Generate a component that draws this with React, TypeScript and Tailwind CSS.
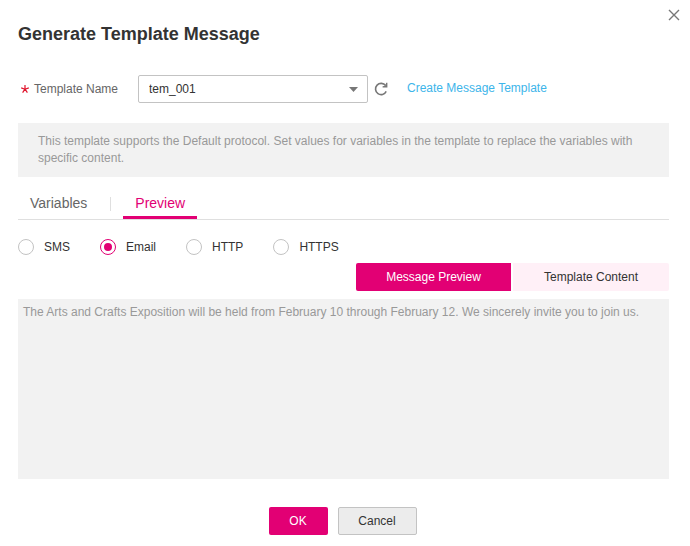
import { useState } from 'react';

const protocols = ['SMS', 'Email', 'HTTP', 'HTTPS'];

function CloseIcon() {
  return (
    <svg width="12" height="12" viewBox="0 0 12 12" fill="none" stroke="#777777" strokeWidth="1.4" aria-hidden="true">
      <path d="M1 1l10 10M11 1L1 11" />
    </svg>
  );
}

function RefreshIcon() {
  return (
    <svg width="14" height="14" viewBox="0 0 14 14" fill="none" aria-hidden="true">
      <path d="M11.6 3.6A5.6 5.6 0 1 0 12.2 9.4" stroke="#777777" strokeWidth="1.6" />
      <path d="M13.4 0.8V5.4H8.6V4.2L11.2 3.8L12.2 0.8Z" fill="#777777" />
    </svg>
  );
}

function RequiredMark() {
  return (
    <svg width="8" height="8" viewBox="0 0 8 8" stroke="#e0142c" strokeWidth="1.2" aria-hidden="true">
      <path d="M4 0v4M0.2 2.9L4 4.2M7.8 2.9L4 4.2M1.6 7.6L4 4.2M6.4 7.6L4 4.2" />
    </svg>
  );
}

export default function App() {
  const [protocol, setProtocol] = useState('Email');

  return (
    <div
      role="dialog"
      aria-labelledby="dialog-title"
      className="bg-white pt-2 pr-[21px] pb-[11px] pl-[18px] font-['Liberation_Sans',Arial,sans-serif] text-[12px] leading-[17px] text-[#333333]"
    >
      <div className="flex items-start justify-between">
        <h2 id="dialog-title" className="pt-[14px] text-[18px] leading-6 font-bold">
          Generate Template Message
        </h2>
        <button type="button" aria-label="Close" className="-mr-3 p-px">
          <CloseIcon />
        </button>
      </div>

      <div className="mt-[29px] flex items-center">
        <label htmlFor="template" className="flex w-[120px] items-center gap-[5px] pl-[3px] text-[#666666]">
          <RequiredMark />
          Template Name
        </label>
        <div className="relative w-[230px]">
          <select
            id="template"
            className="h-7 w-full appearance-none rounded-xs border border-[#c3c3c3] bg-white pl-[10px]"
          >
            <option>tem_001</option>
          </select>
          <svg className="pointer-events-none absolute top-3 right-[10px]" width="9" height="5" viewBox="0 0 9 5" aria-hidden="true">
            <path d="M0 0h9L4.5 5z" fill="#777777" />
          </svg>
        </div>
        <button type="button" aria-label="Refresh" className="ml-[6px]">
          <RefreshIcon />
        </button>
        <a href="#" className="ml-[19px] pb-[2px] text-[#3db5ea]">
          Create Message Template
        </a>
      </div>

      <p className="mt-5 bg-[#f2f2f2] px-5 py-[10px] text-[#999999]">
        This template supports the Default protocol. Set values for variables in the template to replace the variables
        with specific content.
      </p>

      <div role="tablist" className="mt-4 flex h-[27px] items-start border-b border-[#dfdfdf] text-[14px] leading-5">
        <button type="button" role="tab" aria-selected="false" className="px-3 text-[#666666]">
          Variables
        </button>
        <span className="mt-1 ml-[11px] h-[14px] w-px bg-[#dfdfdf]" />
        <button
          type="button"
          role="tab"
          aria-selected="true"
          className="ml-3 h-[26px] border-b-3 border-[#e20074] px-3 pb-[3px] text-[#e20074]"
        >
          Preview
        </button>
      </div>

      <fieldset className="mt-[19px] flex gap-[30px]">
        {protocols.map((name) => (
          <label key={name} className="flex h-4 items-center gap-[10px]">
            <input
              type="radio"
              name="protocol"
              checked={protocol === name}
              onChange={() => setProtocol(name)}
              className="grid size-4 appearance-none place-items-center rounded-full border border-[#c3c3c3] bg-white before:size-2 before:rounded-full checked:border-[#e20074] checked:before:bg-[#e20074]"
            />
            {name}
          </label>
        ))}
      </fieldset>

      <div className="mt-2 flex justify-end gap-[2px]">
        <button type="button" aria-pressed="true" className="h-7 w-[155px] rounded-l-xs bg-[#e20074] text-white">
          Message Preview
        </button>
        <button type="button" aria-pressed="false" className="h-7 w-[156px] rounded-r-xs bg-[#fff0f7]">
          Template Content
        </button>
      </div>

      <textarea
        readOnly
        aria-label="Message preview"
        className="mt-2 block h-[180px] w-full resize-none bg-[#f2f2f2] p-[5px] text-[#999999] outline-none"
        value="The Arts and Crafts Exposition will be held from February 10 through February 12. We sincerely invite you to join us."
      />

      <div className="mt-7 flex justify-center gap-[10px] pr-[2px]">
        <button type="button" className="h-7 w-[59px] rounded-xs bg-[#e20074] text-white">
          OK
        </button>
        <button type="button" className="h-7 w-[79px] rounded-xs border border-[#c3c3c3] bg-[#ececec]">
          Cancel
        </button>
      </div>
    </div>
  );
}
